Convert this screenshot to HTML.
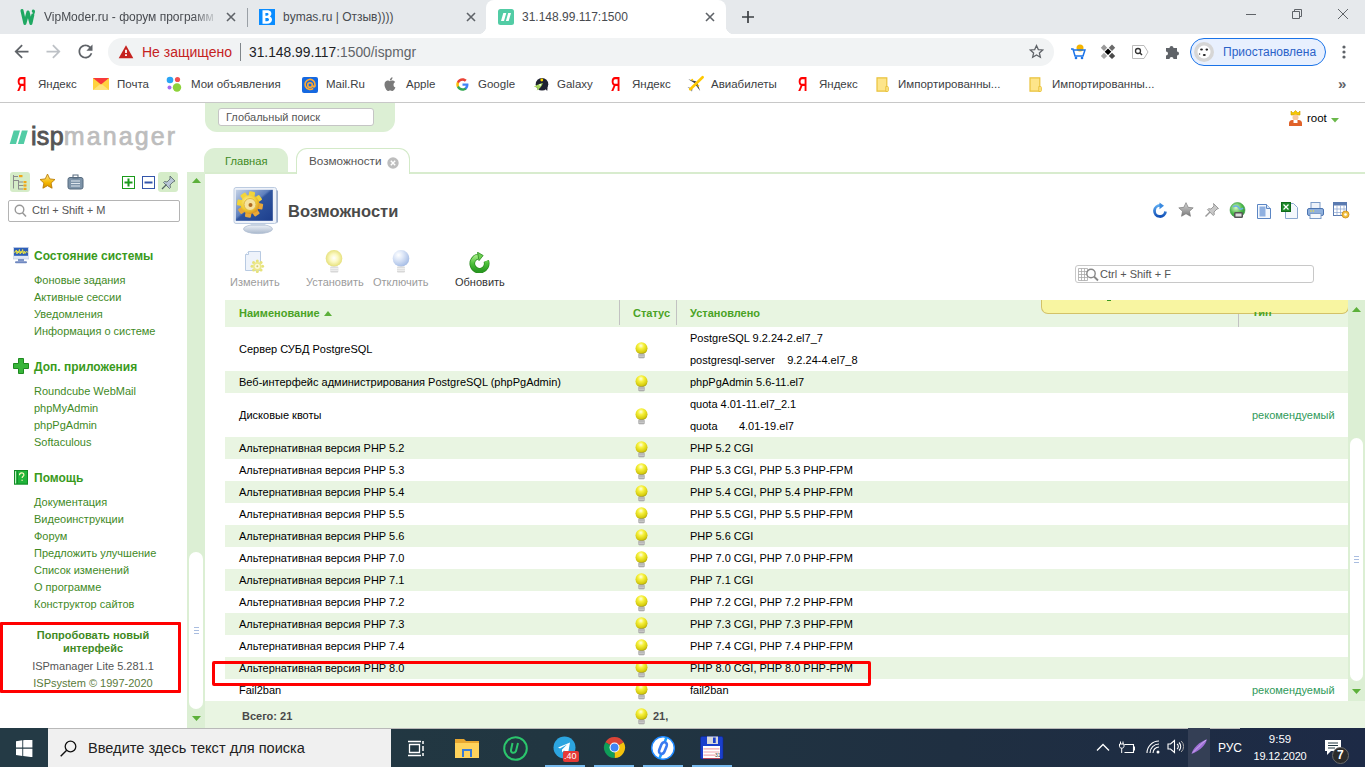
<!DOCTYPE html>
<html><head><meta charset="utf-8">
<style>
*{margin:0;padding:0;box-sizing:border-box}
html,body{width:1365px;height:767px;overflow:hidden;background:#fff;font-family:"Liberation Sans",sans-serif}
.a{position:absolute}
.t{position:absolute;white-space:nowrap}
/* chrome */
#tabs{position:absolute;left:0;top:0;width:1365px;height:34px;background:#e6e9ec}
#toolbar{position:absolute;left:0;top:34px;width:1365px;height:34px;background:#fff}
#bm{position:absolute;left:0;top:68px;width:1365px;height:35px;background:#fff;border-bottom:1px solid #c8c8c8}
.tabtxt{font-size:12px;color:#484b50}
.bmt{font-size:11.5px;color:#3c4043;margin-top:1px}
/* page */
#page{position:absolute;left:0;top:103px;width:1365px;height:625px;background:#fff;overflow:hidden}
.sh{font:bold 12px "Liberation Sans";color:#3a9a1c}
.sl{font-size:11px;color:#3f8a1f}
.rowt{font-size:11px;color:#000}
.th{font:bold 11px "Liberation Sans";color:#4aa325}
.side a{color:#3f8a1f}
/* taskbar */
#task{position:absolute;left:0;top:728px;width:1365px;height:39px;background:linear-gradient(90deg,#243a45 0%,#213641 40%,#1f2f41 70%,#1d2a46 100%)}
</style></head><body>
<svg width="0" height="0" style="position:absolute"><defs><radialGradient id="bulbg" cx="45%" cy="30%" r="70%"><stop offset="0" stop-color="#ffffe6"/><stop offset=".35" stop-color="#f7f23c"/><stop offset=".8" stop-color="#d6cc10"/><stop offset="1" stop-color="#a99e00"/></radialGradient><symbol id="bulb" viewBox="0 0 13 17"><circle cx="6.5" cy="6.2" r="6" fill="url(#bulbg)"/><rect x="3.3" y="11.5" width="6.4" height="4.8" rx="1.2" fill="#9a9a9a"/><path d="M3.5 13h6M3.5 14.8h6" stroke="#e8e8e8" stroke-width=".8"/></symbol></defs></svg>
<div id="tabs">
 <!-- tab1 -->
 <svg class="a" style="left:19px;top:8px" width="18" height="18" viewBox="0 0 18 18"><path d="M3 2.6L5.9 15.4L9 4L11.9 15.4L13.8 7" fill="none" stroke="#1fa862" stroke-width="3.1" stroke-linecap="round" stroke-linejoin="round"/><path d="M14.2 1.5c1.3 0 1.9 1 1.8 2.200-.1 1.500-.9 2.700-1.800 3.800l-.7-.3c.4-.9.6-1.600.5-2.300-.8-.3-1.300-1-1.200-1.800.1-.9.700-1.600 1.400-1.600z" fill="#1fa862"/></svg>
 <div class="t tabtxt" style="left:44px;top:10px;width:175px;overflow:hidden;-webkit-mask-image:linear-gradient(90deg,#000 85%,transparent)">VipModer.ru - форум программ</div>
 <svg class="a" style="left:226px;top:12px" width="10" height="10" viewBox="0 0 10 10"><path d="M1 1L9 9M9 1L1 9" stroke="#5f6368" stroke-width="1.6"/></svg>
 <div class="a" style="left:247px;top:8px;width:1px;height:19px;background:#9aa0a6"></div>
 <!-- tab2 -->
 <svg class="a" style="left:259px;top:9px" width="16" height="16" viewBox="0 0 16 16"><rect width="16" height="16" fill="#0a8cff"/><path fill-rule="evenodd" fill="#fff" d="M3.5 1.3H8C11.3 1.300 12.400 3 12.400 4.800C12.400 6 11.800 6.900 10.800 7.400C12.300 7.900 13 9.100 13 10.600C13 13 11.200 14.800 8 14.800H3.500ZM6.400 4V6.700H7.900C8.900 6.700 9.500 6.200 9.500 5.300C9.500 4.500 8.900 4 7.900 4ZM6.400 9V12.200H8.100C9.300 12.200 10 11.600 10 10.600C10 9.600 9.300 9 8.100 9Z"/></svg>
 <div class="t tabtxt" style="left:283px;top:10px">bymas.ru | Отзыв))))</div>
 <svg class="a" style="left:466px;top:12px" width="10" height="10" viewBox="0 0 10 10"><path d="M1 1L9 9M9 1L1 9" stroke="#5f6368" stroke-width="1.6"/></svg>
 <!-- active tab -->
 <div class="a" style="left:486px;top:0;width:240px;height:34px;background:#fff;border-radius:8px 8px 0 0"></div>
 <div class="a" style="left:478px;top:26px;width:8px;height:8px;background:radial-gradient(circle at 0 0,#e6e9ec 8px,#fff 8.5px)"></div>
 <div class="a" style="left:726px;top:26px;width:8px;height:8px;background:radial-gradient(circle at 100% 0,#e6e9ec 8px,#fff 8.5px)"></div>
 <div class="a" style="left:498px;top:9px;width:16px;height:16px;background:#52cca5;border-radius:2.5px"></div>
 <svg class="a" style="left:498px;top:9px" width="16" height="16" viewBox="0 0 16 16"><path d="M5.3 4h3l-2.3 8h-3zM10.200 4h2.800l-2.300 8h-2.800z" fill="#fff"/></svg>
 <div class="t tabtxt" style="left:522px;top:10px">31.148.99.117:1500</div>
 <svg class="a" style="left:705px;top:12px" width="10" height="10" viewBox="0 0 10 10"><path d="M1 1L9 9M9 1L1 9" stroke="#5f6368" stroke-width="1.6"/></svg>
 <svg class="a" style="left:741px;top:10px" width="14" height="14" viewBox="0 0 14 14"><path d="M7 1V13M1 7H13" stroke="#3c4043" stroke-width="1.7"/></svg>
 <!-- window controls -->
 <div class="a" style="left:1246px;top:14px;width:10px;height:1px;background:#5f6368"></div>
 <svg class="a" style="left:1291px;top:8px" width="12" height="12" viewBox="0 0 12 12"><path d="M1.5 3.5h7v7h-7z M3.5 3.5V1.5h7v7h-2" fill="none" stroke="#5f6368" stroke-width="1"/></svg>
 <svg class="a" style="left:1337px;top:8px" width="12" height="12" viewBox="0 0 12 12"><path d="M1 1L11 11M11 1L1 11" stroke="#5f6368" stroke-width="1"/></svg>
</div>
<div id="toolbar">
 <svg class="a" style="left:11px;top:7px" width="21" height="21" viewBox="0 0 24 24"><path d="M20 11H7.830l5.590-5.590L12 4l-8 8 8 8 1.410-1.410L7.830 13H20v-2z" fill="#5f6368"/></svg>
 <svg class="a" style="left:43px;top:7px" width="21" height="21" viewBox="0 0 24 24"><path d="M12 4l-1.410 1.410L16.170 11H4v2h12.170l-5.580 5.590L12 20l8-8z" fill="#bdc1c6"/></svg>
 <svg class="a" style="left:75px;top:7px" width="21" height="21" viewBox="0 0 24 24"><path d="M17.650 6.350C16.200 4.900 14.210 4 12 4c-4.420 0-7.990 3.580-7.990 8s3.570 8 7.990 8c3.730 0 6.840-2.550 7.730-6h-2.080c-.820 2.330-3.040 4-5.650 4-3.310 0-6-2.690-6-6s2.690-6 6-6c1.660 0 3.140.690 4.220 1.780L13 11h7V4l-2.350 2.350z" fill="#5f6368"/></svg>
 <div class="a" style="left:108px;top:4px;width:946px;height:28px;background:#f1f3f4;border-radius:14px"></div>
 <svg class="a" style="left:118px;top:11px" width="16" height="14" viewBox="0 0 16 14"><path d="M8 0.3L15.3 13.3H0.7Z" fill="#c5221f"/><path d="M7.1 4.7h1.8v3.3h-1.8zM7.1 9.3h1.8v1.8h-1.8z" fill="#fff"/></svg>
 <div class="t" style="left:142px;top:10px;font-size:14px;color:#c5221f">Не защищено</div>
 <div class="a" style="left:240px;top:9px;width:1px;height:18px;background:#80868b"></div>
 <div class="t" style="left:249px;top:11px;font-size:13.8px;color:#202124">31.148.99.117<span style="color:#5f6368">:1500/ispmgr</span></div>
 <svg class="a" style="left:1028.5px;top:10px" width="15" height="15" viewBox="0 0 24 24"><path d="M12 2.5l2.9 6.4 7 .7-5.3 4.7 1.6 6.9L12 17.6l-6.2 3.6 1.6-6.9L2.1 9.6l7-.7z" fill="none" stroke="#5f6368" stroke-width="2"/></svg>
 <!-- extensions -->
 <svg class="a" style="left:1070px;top:10px" width="16" height="16" viewBox="0 0 16 16"><circle cx="10" cy="4" r="3.5" fill="#f4b400"/><path d="M1 5h2l2 7h8l2-6H4" fill="none" stroke="#1a73e8" stroke-width="1.5"/><circle cx="6" cy="14" r="1.3" fill="#1a73e8"/><circle cx="12" cy="14" r="1.3" fill="#1a73e8"/></svg>
 <svg class="a" style="left:1100px;top:10px" width="16" height="16" viewBox="0 0 16 16"><path d="M4 0.5L7.2 3.7 4 6.9 0.8 3.7Z" fill="#9a9a9a"/><path d="M12 0.5L15.2 3.7 12 6.9 8.8 3.7Z" fill="#6a6a6a"/><path d="M8 4.5L11.3 7.8 8 11.1 4.7 7.8Z" fill="#000"/><path d="M4 8.7L7.2 11.9 4 15.1 0.8 11.9Z" fill="#a8a8a8"/><path d="M12 8.7L15.2 11.9 12 15.1 8.8 11.9Z" fill="#4a4a4a"/></svg>
 <svg class="a" style="left:1132px;top:10px" width="17" height="16" viewBox="0 0 17 16"><path d="M0.5 1.5H12L16 8L12 14.5H0.5Z" fill="#fff" stroke="#bbb"/><circle cx="6" cy="7" r="2.5" fill="none" stroke="#333" stroke-width="1.3"/><path d="M7.8 8.8L10 11" stroke="#333" stroke-width="1.5"/></svg>
 <svg class="a" style="left:1164px;top:10px" width="16" height="16" viewBox="0 0 16 16"><path d="M2 4h3.5a2 2 0 1 1 4 0H13v3.5a2 2 0 1 1 0 4V15H9.5a2 2 0 1 0-4 0H2v-3.5a2 2 0 1 0 0-4z" fill="#5f6368"/></svg>
 <div class="a" style="left:1190px;top:4px;width:136px;height:28px;border:1.5px solid #1a73e8;border-radius:14px;background:#e8f0fe"></div>
 <div class="a" style="left:1194px;top:8px;width:20px;height:20px;border-radius:50%;background:#d6d6d6"></div>
 <svg class="a" style="left:1196px;top:10px" width="16" height="16" viewBox="0 0 16 16"><circle cx="8" cy="8" r="6.5" fill="#fff"/><ellipse cx="5.5" cy="5.5" rx="1.4" ry="1.1" fill="#222"/><ellipse cx="10.8" cy="5.6" rx="1.3" ry="1.1" fill="#222"/><ellipse cx="8.3" cy="11" rx="1.5" ry="1.1" fill="#222"/><circle cx="3.6" cy="10" r=".7" fill="#444"/></svg>
 <div class="t" style="left:1223px;top:11px;font-size:12px;color:#2a62c8">Приостановлена</div>
 <svg class="a" style="left:1341px;top:10px" width="6" height="16" viewBox="0 0 6 16"><circle cx="3" cy="3" r="1.6" fill="#5f6368"/><circle cx="3" cy="8" r="1.6" fill="#5f6368"/><circle cx="3" cy="13" r="1.6" fill="#5f6368"/></svg>
</div>
<div id="bm">
 <div class="t" style="left:17px;top:4px;font:bold 21px 'Liberation Sans';color:#f00;line-height:24px;transform:scaleX(.62);transform-origin:0 0">Я</div>
 <div class="t bmt" style="left:38px;top:9px">Яндекс</div>
 <svg class="a" style="left:93px;top:10px" width="16" height="13" viewBox="0 0 16 13"><rect x="0" y="0" width="16" height="12" fill="#ffd23f"/><path d="M0 12L8 5.5L16 12Z" fill="#ffe27a"/><path d="M0 0H16L8 6.5Z" fill="#f8383a"/></svg>
 <div class="t bmt" style="left:117px;top:9px">Почта</div>
 <svg class="a" style="left:166px;top:8px" width="17" height="17" viewBox="0 0 17 17"><circle cx="4" cy="4" r="3.3" fill="#2aa5f5"/><circle cx="11.5" cy="3.5" r="2.6" fill="#f25050"/><circle cx="3.5" cy="11.5" r="2" fill="#a66af0"/><circle cx="11" cy="11.5" r="4.2" fill="#8ed23a"/></svg>
 <div class="t bmt" style="left:191px;top:9px">Мои объявления</div>
 <div class="a" style="left:302px;top:9px;width:16px;height:16px;background:#1568e0;border-radius:2px"></div>
 <svg class="a" style="left:302px;top:9px" width="16" height="16" viewBox="0 0 16 16"><path d="M11.2 11.3A5 5 0 1 1 13 8v1c0 1.3-2.2 1.3-2.2 0V8" fill="none" stroke="#ffa930" stroke-width="1.7"/><circle cx="8" cy="8" r="2.3" fill="none" stroke="#ffa930" stroke-width="1.6"/></svg>
 <div class="t bmt" style="left:326px;top:9px">Mail.Ru</div>
 <svg class="a" style="left:384px;top:9px" width="12" height="15" viewBox="0 0 12 15"><path d="M9.5 8c0-2 1.6-2.8 1.7-2.9C10.2 3.800 8.900 3.600 8.400 3.600 7.300 3.500 6.400 4.200 5.900 4.200S4.600 3.600 3.700 3.600C2.500 3.600 0.500 4.600 0.500 7.600c0 3 2.200 6.400 3.400 6.400 1 0 1.300-.6 2.300-.6s1.300.6 2.300.6C9.600 14 11 11.500 11.400 10.500 11.300 10.400 9.500 9.800 9.500 8zM7.800 2.500C8.300 1.900 8.600 1.100 8.500 0.300 7.800.4 7 .8 6.500 1.400 6 1.900 5.700 2.700 5.800 3.500 6.600 3.500 7.300 3.100 7.800 2.500z" fill="#7a7a7a"/></svg>
 <div class="t bmt" style="left:406px;top:9px">Apple</div>
 <svg class="a" style="left:456px;top:10px" width="13" height="13" viewBox="0 0 24 24"><path d="M23 12.3c0-.8-.1-1.600-.2-2.300H12v4.400h6.200c-.3 1.400-1.100 2.600-2.300 3.400v2.800h3.700C21.800 18.600 23 15.700 23 12.300z" fill="#4285f4"/><path d="M12 23.500c3.100 0 5.700-1 7.600-2.800l-3.700-2.800c-1 .7-2.300 1.100-3.900 1.100-3 0-5.500-2-6.400-4.700H1.800v2.900C3.700 21 7.500 23.500 12 23.500z" fill="#34a853"/><path d="M5.600 14.300c-.2-.7-.4-1.400-.4-2.300s.1-1.600.4-2.300V6.800H1.800C1 8.300.5 10.100.5 12s.5 3.700 1.300 5.200z" fill="#fbbc05"/><path d="M12 5c1.700 0 3.200.6 4.400 1.700l3.300-3.300C17.700 1.500 15.100.5 12 .5 7.500.5 3.700 3 1.800 6.800l3.800 2.900C6.500 7 9 5 12 5z" fill="#ea4335"/></svg>
 <div class="t bmt" style="left:478px;top:9px">Google</div>
 <svg class="a" style="left:533px;top:8px" width="16" height="16" viewBox="0 0 16 16"><circle cx="9" cy="8.200" r="6.300" fill="#1e2130"/><path d="M12 12.500L14.200 15 14.600 11.500Z" fill="#1e2130"/><circle cx="8.800" cy="4" r="1.400" fill="#ffd500"/><path d="M0.8 10.800C3 9.500 6 8 9.800 7C9.200 9.800 7.200 12.200 3.800 14.500L4.300 11.600Z" fill="#a8d860"/><circle cx="7.200" cy="8.800" r=".9" fill="#fff"/></svg>
 <div class="t bmt" style="left:557px;top:9px">Galaxy</div>
 <div class="t" style="left:611px;top:4px;font:bold 21px 'Liberation Sans';color:#f00;line-height:24px;transform:scaleX(.62);transform-origin:0 0">Я</div>
 <div class="t bmt" style="left:632px;top:9px">Яндекс</div>
 <svg class="a" style="left:687px;top:7px" width="17" height="17" viewBox="0 0 17 17"><path d="M1.300 4.300L9.500 6.400 7.800 8.300Z" fill="#3c4048"/><path d="M10.300 8.200L13.200 16 8.700 10Z" fill="#3c4048"/><path d="M0.500 12.200L3.800 13 3.200 14Z" fill="#3c4048"/><path d="M3.900 14.200L5 16.800 5.300 13.600Z" fill="#3c4048"/><path d="M3.300 14.300L15.600 2.200" stroke="#ffc800" stroke-width="2.600" stroke-linecap="round"/><circle cx="5.200" cy="4.700" r="1" fill="#ffc800"/><circle cx="11.300" cy="10.800" r="1" fill="#ffc800"/></svg>
 <div class="t bmt" style="left:711px;top:9px">Авиабилеты</div>
 <div class="t" style="left:798px;top:4px;font:bold 21px 'Liberation Sans';color:#f00;line-height:24px;transform:scaleX(.62);transform-origin:0 0">Я</div>
 <div class="t bmt" style="left:819px;top:9px">Яндекс</div>
 <svg class="a" style="left:876px;top:9px" width="13" height="15" viewBox="0 0 13 15"><path d="M1 0.8H10.8V14.2H1Z" fill="#fde58a" stroke="#e9c23c" stroke-width="1.2"/><path d="M9.800 9.500h1.700c.600 0 .800.400.800 1v3.200c0 .500-.300.800-.800.800H9.800Z" fill="#fde58a" stroke="#e9c23c" stroke-width="1"/></svg>
 <div class="t bmt" style="left:898px;top:9px">Импортированны...</div>
 <svg class="a" style="left:1029px;top:9px" width="13" height="15" viewBox="0 0 13 15"><path d="M1 0.8H10.8V14.2H1Z" fill="#fde58a" stroke="#e9c23c" stroke-width="1.2"/><path d="M9.800 9.500h1.700c.600 0 .800.400.800 1v3.200c0 .500-.300.800-.800.800H9.800Z" fill="#fde58a" stroke="#e9c23c" stroke-width="1"/></svg>
 <div class="t bmt" style="left:1052px;top:9px">Импортированны...</div>
 <div class="t" style="left:1338px;top:7px;font:bold 15px 'Liberation Sans';color:#5f6368">»</div>
</div>
<div id="page">
 <!-- logo -->
 <svg class="a" style="left:9px;top:27px" width="19" height="15" viewBox="0 0 19 15"><path d="M4.7 0.5h6.3l-4 13.5h-6.3zM12.9 0.5h5.9l-4 13.5h-5.9z" fill="#52cca5"/></svg>
 <div class="t" style="left:31px;top:16px;font-size:25px;line-height:34px;color:#555;-webkit-text-stroke:0.9px #555;letter-spacing:0.3px">isp<span style="color:#bdbdbd;-webkit-text-stroke:0.7px #bdbdbd;letter-spacing:2.1px">manager</span></div>
 <!-- sidebar toolbar -->
 <div class="a" style="left:10px;top:69px;width:20px;height:20px;background:#d5ecc8;border-radius:3px"></div>
 <svg class="a" style="left:10px;top:69px" width="20" height="20" viewBox="0 0 20 20"><path d="M3.5 3v13.5M3 4.5h5M3.5 8.5h5M8.5 8v9M8 10h5M8.5 13.5h5M8 17h5" stroke="#8c8c8c" stroke-width="1" fill="none"/><rect x="9" y="3" width="3.5" height="2.2" fill="#f0a818"/><rect x="13.5" y="9" width="3" height="2.2" fill="#f0a818"/><rect x="13.5" y="12.4" width="3" height="2.2" fill="#f0a818"/><rect x="13.5" y="15.8" width="3" height="2.2" fill="#f0a818"/></svg>
 <svg class="a" style="left:39px;top:70px" width="17" height="17" viewBox="0 0 24 24"><defs><linearGradient id="sg" x1="0" y1="0" x2="0" y2="1"><stop offset="0" stop-color="#ffe890"/><stop offset=".6" stop-color="#f5b800"/><stop offset="1" stop-color="#d08a00"/></linearGradient></defs><path d="M12 1.5l3.2 6.8 7.3.9-5.4 5 1.4 7.3L12 17.9l-6.5 3.6 1.4-7.3-5.4-5 7.3-.9z" fill="url(#sg)" stroke="#b87a00" stroke-width="1.2"/></svg>
 <svg class="a" style="left:67px;top:71px" width="17" height="16" viewBox="0 0 17 16"><rect x="1" y="3.5" width="15" height="11.5" rx="2" fill="#7d93a8" stroke="#566a7e"/><rect x="6" y="1" width="5" height="3" fill="none" stroke="#566a7e"/><path d="M4 7h9M4 9.5h9M4 12h9" stroke="#dfe7ee" stroke-width="1.2"/></svg>
 <svg class="a" style="left:122px;top:73px" width="14" height="13" viewBox="0 0 14 13"><rect x="0.5" y="0.5" width="12" height="12" fill="#fff" stroke="#1b9a1b"/><path d="M6.5 2.5v8M2.5 6.5h8" stroke="#1b9a1b" stroke-width="2"/></svg>
 <svg class="a" style="left:142px;top:73px" width="14" height="13" viewBox="0 0 14 13"><rect x="0.5" y="0.5" width="12" height="12" fill="#fff" stroke="#3355aa"/><path d="M2.5 6.5h8" stroke="#3355aa" stroke-width="2"/></svg>
 <div class="a" style="left:158px;top:69px;width:20px;height:20px;background:#d5ecc8;border-radius:3px"></div>
 <svg class="a" style="left:161px;top:72px" width="15" height="15" viewBox="0 0 15 15"><path d="M9 1l5 5-2 1-3 3 .5 2.5-1 1-6-6 1-1 2.5.5 3-3z" fill="#b9c6d6" stroke="#566" stroke-width=".8"/><path d="M5.5 9.5L1 14" stroke="#566" stroke-width="1.3"/></svg>
 <div class="a" style="left:8px;top:97px;width:172px;height:22px;border:1px solid #b4b4b4;border-radius:2px"></div>
 <svg class="a" style="left:14px;top:101px" width="13" height="14" viewBox="0 0 13 14"><circle cx="5.5" cy="5.5" r="4.3" fill="none" stroke="#999" stroke-width="1.4"/><path d="M8.5 8.8L12 12.5" stroke="#999" stroke-width="1.6"/></svg>
 <div class="t" style="left:32px;top:101px;font-size:11px;color:#555">Ctrl + Shift + M</div>
 <!-- groups -->
 <svg class="a" style="left:13px;top:144px" width="16" height="17" viewBox="0 0 16 17"><rect x="0" y="0" width="16" height="12" fill="#dfe7f5" stroke="#b0c0dc" stroke-width=".5"/><rect x="1" y="0.8" width="14" height="8" fill="#2f5fb8"/><path d="M1 5.300L2.500 5 3.300 3 4 7 4.800 4 5.600 6 6.400 2.500 7.200 7 8 4 8.800 6 9.600 2.500 10.400 7 11.200 4 12 6.500 13 4.500 15 5.300" fill="none" stroke="#f2ea3c" stroke-width=".9"/><rect x="5" y="12" width="6" height="2.300" fill="#7d95c8"/><rect x="2" y="14.200" width="12" height="2" rx="1" fill="#6f88c0"/></svg>
 <div class="t sh" style="left:34px;top:146px">Состояние системы</div>
 <div class="t sl" style="left:34px;top:171px">Фоновые задания</div>
<div class="t sl" style="left:34px;top:188px">Активные сессии</div>
<div class="t sl" style="left:34px;top:205px">Уведомления</div>
<div class="t sl" style="left:34px;top:222px">Информация о системе</div>
 <svg class="a" style="left:13px;top:255px" width="16" height="16" viewBox="0 0 16 16"><path d="M5.5 0.5h5v5h5v5h-5v5h-5v-5h-5v-5h5z" fill="#38b63a" stroke="#1f8a20"/></svg>
 <div class="t sh" style="left:34px;top:257px">Доп. приложения</div>
 <div class="t sl" style="left:34px;top:282px">Roundcube WebMail</div>
<div class="t sl" style="left:34px;top:299px">phpMyAdmin</div>
<div class="t sl" style="left:34px;top:316px">phpPgAdmin</div>
<div class="t sl" style="left:34px;top:333px">Softaculous</div>
 <svg class="a" style="left:14px;top:367px" width="14" height="15" viewBox="0 0 14 15"><rect x="0" y="0" width="14" height="14.500" fill="#1fb43a"/><rect x="0.500" y="0.500" width="13" height="13.500" fill="none" stroke="#138a26" stroke-width="1"/><path d="M1.600 1.200v12.300" stroke="#d8f8d8" stroke-width="1"/><path d="M3.300 1.200v12.300" stroke="#0f7a20" stroke-width=".8"/><path d="M5.500 5.200c0-1.500.900-2.300 2.200-2.300s2.200.800 2.200 2c0 1.300-1.800 1.500-1.800 3" fill="none" stroke="#fff6c0" stroke-width="1.100"/><rect x="7.500" y="9.700" width="1.200" height="1.200" fill="#fff6c0"/></svg>
 <div class="t sh" style="left:34px;top:368px">Помощь</div>
 <div class="t sl" style="left:34px;top:393px">Документация</div>
<div class="t sl" style="left:34px;top:410px">Видеоинструкции</div>
<div class="t sl" style="left:34px;top:427px">Форум</div>
<div class="t sl" style="left:34px;top:444px">Предложить улучшение</div>
<div class="t sl" style="left:34px;top:461px">Список изменений</div>
<div class="t sl" style="left:34px;top:478px">О программе</div>
<div class="t sl" style="left:34px;top:495px">Конструктор сайтов</div>
 <!-- red box -->
 <div class="a" style="left:0;top:519px;width:181px;height:71px;border:3px solid #f00;border-radius:1px"></div>
 <div class="t" style="left:0;width:186px;text-align:center;top:526px;font:bold 11px/13px 'Liberation Sans';color:#3f8a1f">Попробовать новый<br>интерфейс</div>
 <div class="t" style="left:0;width:186px;text-align:center;top:557px;font-size:11px;color:#555">ISPmanager Lite 5.281.1</div>
 <div class="t" style="left:0;width:186px;text-align:center;top:574px;font-size:11px;color:#5a7a3a">ISPsystem © 1997-2020</div>

 <!-- global search panel -->
 <div class="a" style="left:205px;top:0;width:190px;height:29px;background:#dcefd4;border-radius:0 0 12px 12px"></div>
 <div class="a" style="left:218px;top:5px;width:156px;height:18px;background:#fff;border:1px solid #c5c5c5;border-radius:3px"></div>
 <div class="t" style="left:226px;top:8px;font-size:11px;color:#555">Глобальный поиск</div>
 <!-- user -->
 <svg class="a" style="left:1288px;top:7px" width="15" height="16" viewBox="0 0 15 16"><path d="M3 1l2 2 2.5-2.5L10 3l2-2v4H3z" fill="#f6c700" stroke="#c99a00" stroke-width=".6"/><circle cx="7.5" cy="7.5" r="3" fill="#f7c9a0"/><path d="M1 16v-3c0-2 2-3 3-3h7c1 0 3 1 3 3v3z" fill="#e0622a"/><path d="M5.5 10h4v3h-4z" fill="#fff"/></svg>
 <div class="t" style="left:1307px;top:9px;font-size:11.5px;color:#000">root</div>
 <svg class="a" style="left:1331px;top:15px" width="8" height="5" viewBox="0 0 8 5"><path d="M0 0h8l-4 4.5z" fill="#6ab84a"/></svg>

 <!-- tabs -->
 <div class="a" style="left:204px;top:45px;width:84px;height:25px;background:#dcefd4;border-radius:11px 11px 0 0"></div>
 <div class="t" style="left:225px;top:52px;font-size:11.2px;color:#3f8a1f">Главная</div>
 <div class="a" style="left:205px;top:69px;width:1160px;height:2px;background:#d8ecce"></div>
 <div class="a" style="left:296px;top:45px;width:114px;height:26px;background:#fff;border:1px solid #d3eac8;border-bottom:none;border-radius:11px 11px 0 0"></div>
 <div class="t" style="left:309px;top:51px;font-size:11.7px;color:#555">Возможности</div>
 <svg class="a" style="left:387px;top:54px" width="12" height="12" viewBox="0 0 12 12"><circle cx="6" cy="6" r="5.7" fill="#bdbdbd"/><path d="M3.8 3.8L8.2 8.2M8.2 3.8L3.8 8.2" stroke="#fff" stroke-width="1.4"/></svg>

 <!-- splitter strip -->
 <div class="a" style="left:187px;top:69px;width:18px;height:556px;background:#dcefd4"></div>
 <svg class="a" style="left:192px;top:75px" width="9" height="5" viewBox="0 0 9 5"><path d="M0 5h9L4.5 0z" fill="#5cb03a"/></svg>
 <div class="a" style="left:189px;top:449px;width:14px;height:157px;background:#fff;border-radius:7px"></div>
 <div class="a" style="left:194px;top:524px;width:5px;height:1px;background:#a9bde0"></div><div class="a" style="left:194px;top:527px;width:5px;height:1px;background:#a9bde0"></div><div class="a" style="left:194px;top:530px;width:5px;height:1px;background:#a9bde0"></div>
 <svg class="a" style="left:192px;top:613px" width="9" height="5" viewBox="0 0 9 5"><path d="M0 0h9L4.5 5z" fill="#5cb03a"/></svg>

 <!-- page header -->
 <svg class="a" style="left:232px;top:84px" width="48" height="50" viewBox="0 0 48 50"><defs><linearGradient id="scr" x1="0" y1="0" x2="1" y2="1"><stop offset="0" stop-color="#c4d2e6"/><stop offset=".45" stop-color="#5d7fbd"/><stop offset=".5" stop-color="#2f559f"/><stop offset="1" stop-color="#1d3e8c"/></linearGradient><linearGradient id="base" x1="0" y1="0" x2="0" y2="1"><stop offset="0" stop-color="#f2f5fa"/><stop offset="1" stop-color="#a9b8cc"/></linearGradient><radialGradient id="gearg" cx="40%" cy="35%" r="70%"><stop offset="0" stop-color="#fff6a0"/><stop offset=".6" stop-color="#f0cc30"/><stop offset="1" stop-color="#d88a20"/></radialGradient></defs>
<ellipse cx="26" cy="42" rx="14.5" ry="4.6" fill="url(#base)" stroke="#b0bed2" stroke-width=".8"/>
<path d="M20 35h12l2 4H18z" fill="#c8d3e2"/>
<rect x="2" y="0.5" width="42.5" height="36" rx="2" fill="#eef2f9" stroke="#bccbe0" stroke-width="1"/>
<path d="M44.5 2.5l1.5 1.5v31l-1.5 1.5z" fill="#9fb0cc"/>
<rect x="3.8" y="2.8" width="37" height="31" fill="url(#scr)"/>
<rect x="-3" y="-13" width="6" height="6" rx="1" transform="translate(18 17.5) rotate(10)" fill="#f2d43a"/><rect x="-3" y="-13" width="6" height="6" rx="1" transform="translate(18 17.5) rotate(55)" fill="#f2d43a"/><rect x="-3" y="-13" width="6" height="6" rx="1" transform="translate(18 17.5) rotate(100)" fill="#e8a83a"/><rect x="-3" y="-13" width="6" height="6" rx="1" transform="translate(18 17.5) rotate(145)" fill="#e8a83a"/><rect x="-3" y="-13" width="6" height="6" rx="1" transform="translate(18 17.5) rotate(190)" fill="#e8a83a"/><rect x="-3" y="-13" width="6" height="6" rx="1" transform="translate(18 17.5) rotate(235)" fill="#e8a83a"/><rect x="-3" y="-13" width="6" height="6" rx="1" transform="translate(18 17.5) rotate(280)" fill="#f2d43a"/><rect x="-3" y="-13" width="6" height="6" rx="1" transform="translate(18 17.5) rotate(325)" fill="#f2d43a"/>
<circle cx="18" cy="17.5" r="9.5" fill="url(#gearg)"/>
<circle cx="18" cy="17.5" r="6" fill="#f5e3a0" stroke="#e0b840" stroke-width="1"/>
<circle cx="18.5" cy="18.0" r="2" fill="#b06a20"/>
</svg>
 <div class="t" style="left:288px;top:99px;font:bold 16.5px 'Liberation Sans';color:#4a4a4a">Возможности</div>
 <svg class="a" style="left:1152px;top:99px" width="16" height="16" viewBox="0 0 16 16"><defs><linearGradient id="rf" x1="0" y1="0" x2="0" y2="1"><stop offset="0" stop-color="#5aa8f0"/><stop offset="1" stop-color="#1553b8"/></linearGradient></defs><path d="M13.5 9.5A5.5 5.5 0 1 1 8.5 3.5" fill="none" stroke="url(#rf)" stroke-width="2.8"/><path d="M7.5 0.5L12 3.8 7.5 7.2z" fill="#3a8ae0"/></svg>
 <svg class="a" style="left:1178px;top:99px" width="16" height="16" viewBox="0 0 24 24"><defs><linearGradient id="st" x1="0" y1="0" x2="0" y2="1"><stop offset="0" stop-color="#d8d8d8"/><stop offset="1" stop-color="#7a7a7a"/></linearGradient></defs><path d="M12 1l3.3 7 7.5.8-5.6 5.1 1.5 7.5L12 17.6 5.300 21.400l1.500-7.500L1.200 8.800l7.500-.8z" fill="url(#st)" stroke="#777" stroke-width="1"/></svg>
 <svg class="a" style="left:1204px;top:99px" width="16" height="16" viewBox="0 0 16 16"><path d="M9.5 1.5l5 5-1.5.5-3 3 .3 2.5-1 1L3.500 7.700l1-1 2.500.3 3-3z" fill="#c8c8c8" stroke="#888" stroke-width=".8"/><path d="M6 10L1.5 14.5" stroke="#999" stroke-width="1.5"/></svg>
 <svg class="a" style="left:1229px;top:99px" width="17" height="17" viewBox="0 0 17 17"><defs><radialGradient id="gl" cx="40%" cy="35%" r="70%"><stop offset="0" stop-color="#d8f5c8"/><stop offset=".6" stop-color="#4cba4a"/><stop offset="1" stop-color="#2a8a3a"/></radialGradient></defs><circle cx="8.5" cy="8" r="7.5" fill="url(#gl)" stroke="#3a9a40" stroke-width=".6"/><path d="M4 5c2-2 5-1 6 1s3 1 4 0" fill="none" stroke="#6ab0e8" stroke-width="1.5"/><rect x="5" y="10" width="9" height="6" rx="1.5" fill="#555"/><rect x="6.5" y="11.5" width="6" height="3" fill="#ddd"/></svg>
 <svg class="a" style="left:1257px;top:99px" width="14" height="17" viewBox="0 0 14 17"><path d="M0.5 2.5h9l4 4v10h-13z" fill="#f4f8fd" stroke="#5b86c4"/><path d="M2.500 4.500h6v10h-6z" fill="#8fb0e0"/><path d="M9.5 2.5v4h4" fill="#dbe6f5" stroke="#5b86c4"/></svg>
 <svg class="a" style="left:1281px;top:99px" width="17" height="17" viewBox="0 0 17 17"><path d="M4.5 1.5h8l4 4v11h-12z" fill="#f4f8fd" stroke="#8aa8d0"/><rect x="0.5" y="0.5" width="9" height="9" fill="#1e8a2a" stroke="#0f6a1a"/><path d="M2.5 2.5l5 5M7.5 2.5l-5 5" stroke="#fff" stroke-width="1.3"/></svg>
 <svg class="a" style="left:1307px;top:99px" width="17" height="17" viewBox="0 0 17 17"><rect x="4" y="0.5" width="9" height="6" fill="#eef3fa" stroke="#7c9cc8"/><rect x="0.5" y="6.5" width="16" height="7" rx="1.5" fill="#8fb0dc" stroke="#4c74b0"/><rect x="3" y="11.5" width="11" height="5" fill="#f4f8fd" stroke="#7c9cc8"/><circle cx="4" cy="9" r=".8" fill="#f0e040"/><circle cx="6.5" cy="9" r=".8" fill="#f0e040"/></svg>
 <svg class="a" style="left:1333px;top:99px" width="17" height="17" viewBox="0 0 17 17"><rect x="0.5" y="0.5" width="13" height="13" fill="#fff" stroke="#5a7ab0"/><rect x="0.5" y="0.5" width="13" height="3" fill="#5a7ab0"/><path d="M0.5 7h13M0.5 10.5h13M4 3.5v10M7.5 3.5v10M11 3.5v10" stroke="#8aa4d0" stroke-width=".7"/><circle cx="12.5" cy="12.5" r="3.5" fill="#f0c040" stroke="#d08a10" stroke-width=".8"/><circle cx="12.5" cy="12.5" r="1.3" fill="#fff"/></svg>
 <!-- action toolbar -->
 <svg class="a" style="left:245px;top:148px" width="20" height="22" viewBox="0 0 20 22"><path d="M0.5 3.5L3.5 0.5H15.5V19.5H0.5Z" fill="#eef3fb" stroke="#b8cae2"/><path d="M0.5 3.5H3.5V0.5" fill="#fff" stroke="#b8cae2"/><circle cx="17.60" cy="15.30" r="1.5" fill="#e6e27a"/><circle cx="16.05" cy="19.05" r="1.5" fill="#e6e27a"/><circle cx="12.30" cy="20.60" r="1.5" fill="#e6e27a"/><circle cx="8.55" cy="19.05" r="1.5" fill="#e6e27a"/><circle cx="7.00" cy="15.30" r="1.5" fill="#e6e27a"/><circle cx="8.55" cy="11.55" r="1.5" fill="#e6e27a"/><circle cx="12.30" cy="10.00" r="1.5" fill="#e6e27a"/><circle cx="16.05" cy="11.55" r="1.5" fill="#e6e27a"/><circle cx="12.3" cy="15.3" r="4.4" fill="#ece88a"/><circle cx="12.3" cy="15.3" r="2.6" fill="#fbf8d8"/><circle cx="12.3" cy="15.3" r="1" fill="#cfc77a"/></svg>
 <div class="t" style="left:230px;top:173px;font-size:11px;color:#9c9c9c">Изменить</div>
 <svg class="a" style="left:325px;top:147px" width="18" height="23" viewBox="0 0 18 23"><defs><radialGradient id="yb" cx="50%" cy="48%" r="55%"><stop offset="0" stop-color="#ffffff"/><stop offset=".45" stop-color="#fbf8c0"/><stop offset="1" stop-color="#e2dc70"/></radialGradient></defs><circle cx="9" cy="8.4" r="8.3" fill="url(#yb)"/><rect x="5.3" y="16.6" width="8" height="6" rx="1" fill="#d8d8d8"/><path d="M5.3 18.3h8M5.3 20.2h8" stroke="#f8f8f8" stroke-width=".9"/></svg>
 <div class="t" style="left:306px;top:173px;font-size:11px;color:#9c9c9c">Установить</div>
 <svg class="a" style="left:392px;top:147px" width="18" height="23" viewBox="0 0 18 23"><defs><radialGradient id="bb" cx="35%" cy="30%" r="70%"><stop offset="0" stop-color="#ffffff"/><stop offset=".4" stop-color="#dfe8f8"/><stop offset="1" stop-color="#a9bfe6"/></radialGradient></defs><circle cx="9" cy="8.4" r="8.3" fill="url(#bb)"/><rect x="5" y="16.6" width="8" height="6" rx="1" fill="#d8d8d8"/><path d="M5 18.3h8M5 20.2h8" stroke="#f8f8f8" stroke-width=".9"/></svg>
 <div class="t" style="left:373px;top:173px;font-size:11px;color:#9c9c9c">Отключить</div>
 <svg class="a" style="left:468px;top:149px" width="24" height="21" viewBox="0 0 24 21"><defs><linearGradient id="gr" x1="0" y1="0" x2="0" y2="1"><stop offset="0" stop-color="#9ee880"/><stop offset=".5" stop-color="#4cc03a"/><stop offset="1" stop-color="#2a9a22"/></linearGradient></defs><path d="M18.27 9.04A7.2 7.2 0 1 1 10.25 4.41" fill="none" stroke="#2a8a1e" stroke-width="5.6"/><path d="M18.27 9.04A7.2 7.2 0 1 1 10.25 4.41" fill="none" stroke="url(#gr)" stroke-width="4.2"/><path d="M15.17 3.54L9.50 0.17L11.00 8.64Z" fill="#6cd050" stroke="#2a8a1e" stroke-width=".8"/></svg>
 <div class="t" style="left:455px;top:173px;font-size:11px;color:#333">Обновить</div>
 <!-- filter -->
 <div class="a" style="left:1075px;top:162px;width:239px;height:18px;border:1px solid #c8c8c8;border-radius:3px;background:#fff"></div>
 <svg class="a" style="left:1078px;top:164px" width="21" height="15" viewBox="0 0 21 15"><path d="M0.5 1.5h9v12h-9zM0.5 4.5h9M0.5 7.5h9M0.5 10.5h9M3.5 1.5v12M6.5 1.5v12" fill="none" stroke="#aaa" stroke-width=".8"/><circle cx="13" cy="6.5" r="4.2" fill="#fff" stroke="#888" stroke-width="1.4"/><path d="M16 9.5l4 4" stroke="#888" stroke-width="1.8"/></svg>
 <div class="t" style="left:1100px;top:165px;font-size:11px;color:#555">Ctrl + Shift + F</div>
 <!-- tooltip -->

 <!-- table header -->
 <div class="a" style="left:225px;top:197px;width:1123px;height:27px;background:#e8f5e1"></div>
 <div class="a" style="left:1041px;top:197px;width:308px;height:14px;background:#f8f5a1;border:1px solid #d3c268;border-top:none;border-radius:0 0 7px 7px"></div>
 <div class="a" style="left:1107px;top:197px;width:4px;height:1px;background:#3a9a20"></div>
 <div class="t th" style="left:239px;top:204px">Наименование</div>
 <svg class="a" style="left:324px;top:208px" width="8" height="5" viewBox="0 0 8 5"><path d="M0 5h8L4 0z" fill="#5cb03a"/></svg>
 <div class="a" style="left:619px;top:197px;width:1px;height:25px;background:#c2c2c2"></div>
 <div class="t th" style="left:633px;top:204px">Статус</div>
 <div class="a" style="left:676px;top:197px;width:1px;height:25px;background:#c2c2c2"></div>
 <div class="t th" style="left:690px;top:204px">Установлено</div>
 <div class="a" style="left:1238px;top:211px;width:1px;height:13px;background:#c2c2c2"></div>
 <div class="t th" style="left:1252px;top:209px;height:6px;overflow:hidden;line-height:1px">Тип</div>
 <!-- rows -->
<div class="t rowt" style="left:239px;top:240px">Сервер СУБД PostgreSQL</div>
<svg class="a" style="left:635px;top:239px" width="13" height="17"><use href="#bulb"/></svg>
<div class="t rowt" style="left:690px;top:229px">PostgreSQL 9.2.24-2.el7_7</div>
<div class="t rowt" style="left:690px;top:251px">postgresql-server&nbsp;&nbsp;&nbsp;&nbsp;9.2.24-4.el7_8</div>
<div class="a" style="left:225px;top:268px;width:1123px;height:22px;background:#e9f5e2"></div>
<div class="t rowt" style="left:239px;top:273px">Веб-интерфейс администрирования PostgreSQL (phpPgAdmin)</div>
<svg class="a" style="left:635px;top:272px" width="13" height="17"><use href="#bulb"/></svg>
<div class="t rowt" style="left:690px;top:273px">phpPgAdmin 5.6-11.el7</div>
<div class="t rowt" style="left:239px;top:306px">Дисковые квоты</div>
<svg class="a" style="left:635px;top:305px" width="13" height="17"><use href="#bulb"/></svg>
<div class="t rowt" style="left:690px;top:295px">quota 4.01-11.el7_2.1</div>
<div class="t rowt" style="left:690px;top:317px">quota&nbsp;&nbsp;&nbsp;&nbsp;&nbsp;&nbsp;&nbsp;4.01-19.el7</div>
<div class="t rowt" style="left:1252px;top:306px;color:#2f9a5a">рекомендуемый</div>
<div class="a" style="left:225px;top:334px;width:1123px;height:22px;background:#e9f5e2"></div>
<div class="t rowt" style="left:239px;top:339px">Альтернативная версия PHP 5.2</div>
<svg class="a" style="left:635px;top:338px" width="13" height="17"><use href="#bulb"/></svg>
<div class="t rowt" style="left:690px;top:339px">PHP 5.2 CGI</div>
<div class="t rowt" style="left:239px;top:361px">Альтернативная версия PHP 5.3</div>
<svg class="a" style="left:635px;top:360px" width="13" height="17"><use href="#bulb"/></svg>
<div class="t rowt" style="left:690px;top:361px">PHP 5.3 CGI, PHP 5.3 PHP-FPM</div>
<div class="a" style="left:225px;top:378px;width:1123px;height:22px;background:#e9f5e2"></div>
<div class="t rowt" style="left:239px;top:383px">Альтернативная версия PHP 5.4</div>
<svg class="a" style="left:635px;top:382px" width="13" height="17"><use href="#bulb"/></svg>
<div class="t rowt" style="left:690px;top:383px">PHP 5.4 CGI, PHP 5.4 PHP-FPM</div>
<div class="t rowt" style="left:239px;top:405px">Альтернативная версия PHP 5.5</div>
<svg class="a" style="left:635px;top:404px" width="13" height="17"><use href="#bulb"/></svg>
<div class="t rowt" style="left:690px;top:405px">PHP 5.5 CGI, PHP 5.5 PHP-FPM</div>
<div class="a" style="left:225px;top:422px;width:1123px;height:22px;background:#e9f5e2"></div>
<div class="t rowt" style="left:239px;top:427px">Альтернативная версия PHP 5.6</div>
<svg class="a" style="left:635px;top:426px" width="13" height="17"><use href="#bulb"/></svg>
<div class="t rowt" style="left:690px;top:427px">PHP 5.6 CGI</div>
<div class="t rowt" style="left:239px;top:449px">Альтернативная версия PHP 7.0</div>
<svg class="a" style="left:635px;top:448px" width="13" height="17"><use href="#bulb"/></svg>
<div class="t rowt" style="left:690px;top:449px">PHP 7.0 CGI, PHP 7.0 PHP-FPM</div>
<div class="a" style="left:225px;top:466px;width:1123px;height:22px;background:#e9f5e2"></div>
<div class="t rowt" style="left:239px;top:471px">Альтернативная версия PHP 7.1</div>
<svg class="a" style="left:635px;top:470px" width="13" height="17"><use href="#bulb"/></svg>
<div class="t rowt" style="left:690px;top:471px">PHP 7.1 CGI</div>
<div class="t rowt" style="left:239px;top:493px">Альтернативная версия PHP 7.2</div>
<svg class="a" style="left:635px;top:492px" width="13" height="17"><use href="#bulb"/></svg>
<div class="t rowt" style="left:690px;top:493px">PHP 7.2 CGI, PHP 7.2 PHP-FPM</div>
<div class="a" style="left:225px;top:510px;width:1123px;height:22px;background:#e9f5e2"></div>
<div class="t rowt" style="left:239px;top:515px">Альтернативная версия PHP 7.3</div>
<svg class="a" style="left:635px;top:514px" width="13" height="17"><use href="#bulb"/></svg>
<div class="t rowt" style="left:690px;top:515px">PHP 7.3 CGI, PHP 7.3 PHP-FPM</div>
<div class="t rowt" style="left:239px;top:537px">Альтернативная версия PHP 7.4</div>
<svg class="a" style="left:635px;top:536px" width="13" height="17"><use href="#bulb"/></svg>
<div class="t rowt" style="left:690px;top:537px">PHP 7.4 CGI, PHP 7.4 PHP-FPM</div>
<div class="a" style="left:225px;top:554px;width:1123px;height:22px;background:#e9f5e2"></div>
<div class="t rowt" style="left:239px;top:559px">Альтернативная версия PHP 8.0</div>
<svg class="a" style="left:635px;top:558px" width="13" height="17"><use href="#bulb"/></svg>
<div class="t rowt" style="left:690px;top:559px">PHP 8.0 CGI, PHP 8.0 PHP-FPM</div>
<div class="t rowt" style="left:239px;top:581px">Fail2ban</div>
<svg class="a" style="left:635px;top:580px" width="13" height="17"><use href="#bulb"/></svg>
<div class="t rowt" style="left:690px;top:581px">fail2ban</div>
<div class="t rowt" style="left:1252px;top:581px;color:#2f9a5a">рекомендуемый</div>
 <!-- footer -->
 <div class="a" style="left:205px;top:598px;width:1160px;height:27px;background:#e9f5e2"></div>
 <div class="t" style="left:242px;top:607px;font:bold 11px 'Liberation Sans';color:#4a4a4a">Всего: 21</div>
 <svg class="a" style="left:635px;top:605px" width="13" height="17"><use href="#bulb"/></svg>
 <div class="t" style="left:653px;top:607px;font:bold 11px 'Liberation Sans';color:#4a4a4a">21,</div>
 <!-- right scrollbar -->
 <div class="a" style="left:1348px;top:197px;width:17px;height:401px;background:#dcefd4"></div>
 <svg class="a" style="left:1352px;top:204px" width="9" height="5" viewBox="0 0 9 5"><path d="M0 5h9L4.5 0z" fill="#5cb03a"/></svg>
 <div class="a" style="left:1350px;top:335px;width:13px;height:243px;background:#fff;border-radius:7px"></div>
 <div class="a" style="left:1354px;top:453px;width:5px;height:1px;background:#a9bde0"></div><div class="a" style="left:1354px;top:456px;width:5px;height:1px;background:#a9bde0"></div><div class="a" style="left:1354px;top:459px;width:5px;height:1px;background:#a9bde0"></div>
 <svg class="a" style="left:1352px;top:586px" width="9" height="5" viewBox="0 0 9 5"><path d="M0 0h9L4.5 5z" fill="#5cb03a"/></svg>
 <!-- red highlight -->
 <div class="a" style="left:212px;top:558px;width:659px;height:25px;border:3px solid #f00;border-radius:2px"></div>
</div>
<div id="task">
 <div class="a" style="left:0;top:0;width:1240px;height:1px;background:#b9b9b9"></div>
 <div class="a" style="left:0;top:0;width:48px;height:39px;background:#243a45"></div>
 <svg class="a" style="left:16px;top:12px" width="17" height="17" viewBox="0 0 17 17"><path d="M0 1.2L6.3 0.3V7.6H0zM7.2 0.2L16.4 -1V7.6H7.2zM0 8.7H6.3V16L0 15.1zM7.2 8.7H16.4V17.2L7.2 16.1z" fill="#fff"/></svg>
 <div class="a" style="left:48px;top:1px;width:343px;height:38px;background:#f0f0f0"></div>
 <svg class="a" style="left:60px;top:12px" width="17" height="17" viewBox="0 0 17 17"><circle cx="10.5" cy="6.5" r="5.3" fill="none" stroke="#111" stroke-width="1.3"/><path d="M6.7 10.3L0.7 16.3" stroke="#111" stroke-width="1.4"/></svg>
 <div class="t" style="left:88px;top:12px;font-size:14.6px;color:#222">Введите здесь текст для поиска</div>
 <svg class="a" style="left:407px;top:12px" width="18" height="17" viewBox="0 0 18 17"><path d="M1 1.5h13M1 15.5h13M2.5 4.5h10v8h-10z" fill="none" stroke="#fff" stroke-width="1.3"/><path d="M16 1v3M16 6v5M16 13v3" stroke="#fff" stroke-width="1.5"/></svg>
 <svg class="a" style="left:455px;top:10px" width="24" height="20" viewBox="0 0 24 20"><path d="M0 1h9l2 2h13v17H0z" fill="#e8a730"/><path d="M0 5h24v15H0z" fill="#ffd35c"/><path d="M7 11h10v8H7z" fill="#3a7bd5"/><path d="M9 13h6v6H9z" fill="#ffd35c"/></svg>
 <svg class="a" style="left:503px;top:8px" width="25" height="25" viewBox="0 0 25 25"><circle cx="12.5" cy="12.5" r="11.3" fill="none" stroke="#2bc56c" stroke-width="2"/><path d="M9.5 7l-1.5 7c-.5 3 3.5 4 5 1l2-8" fill="none" stroke="#2bc56c" stroke-width="2"/></svg>
 <svg class="a" style="left:553px;top:8px" width="24" height="24" viewBox="0 0 24 24"><circle cx="11.5" cy="11.5" r="11" fill="#2ca5e0"/><path d="M5 11.5l12-5-2 11-4-3-2 2v-3l5-5-7 4z" fill="#fff"/></svg>
 <div class="a" style="left:563px;top:23px;width:16px;height:11px;background:#e53935;border-radius:2px"></div>
 <div class="t" style="left:564px;top:23px;font:9px/11px 'Liberation Sans';color:#fff">.40</div>
 <svg class="a" style="left:603px;top:8px" width="23" height="23" viewBox="0 0 24 24"><path d="M12 12L21.53 6.5A11 11 0 0 0 2.47 6.5Z" fill="#db4437"/><path d="M12 12L12 23A11 11 0 0 0 21.53 6.5Z" fill="#f4c20d"/><path d="M12 12L2.47 6.5A11 11 0 0 0 12 23Z" fill="#0f9d58"/><circle cx="12" cy="12" r="5.2" fill="#fff"/><circle cx="12" cy="12" r="4.1" fill="#4285f4"/></svg>
 <svg class="a" style="left:651px;top:8px" width="24" height="24" viewBox="0 0 24 24"><circle cx="12" cy="12" r="11.300" fill="#fff" stroke="#1e88ff" stroke-width="1.500"/><path d="M15.500 1.500L13.600 6.200" stroke="#1ea0ff" stroke-width="2.600"/><path d="M8.400 22.500L10.400 17.800" stroke="#1ea0ff" stroke-width="2.600"/><path d="M13.800 6.300C15.600 6.700 16.300 8.200 15.600 10.200L13.600 15.300C12.800 17.400 11.300 18.200 9.700 17.700 8.100 17.200 7.600 15.600 8.400 13.600L10.400 8.600C11.200 6.700 12.200 6 13.800 6.300Z" fill="none" stroke="#3a7af0" stroke-width="2.600"/></svg>
 <svg class="a" style="left:700px;top:8px" width="24" height="24" viewBox="0 0 24 24"><rect x="0.500" y="0.500" width="22.500" height="22.500" rx="1.500" fill="#1a3fcc" stroke="#0e2a90" stroke-width=".6"/><rect x="7" y="0.500" width="11" height="7.500" fill="#d8d8d8"/><rect x="13" y="1.500" width="2.700" height="5.500" fill="#1a3fcc"/><rect x="3" y="10" width="17" height="12.800" fill="#fff"/><path d="M3.500 12.800h16M3.500 16h16M3.500 19.200h12" stroke="#f0a8b0" stroke-width="1.200"/><path d="M3 22.500h17" stroke="#b02030" stroke-width=".8"/><text x="15" y="21" font-family="Liberation Sans" font-size="5" fill="#333">31</text></svg>
 <div class="a" style="left:545px;top:37px;width:40px;height:2px;background:#76b9ed"></div>
 <div class="a" style="left:594px;top:37px;width:40px;height:2px;background:#76b9ed"></div>
 <div class="a" style="left:643px;top:37px;width:40px;height:2px;background:#76b9ed"></div>
 <div class="a" style="left:692px;top:37px;width:40px;height:2px;background:#76b9ed"></div>
 <!-- tray -->
 <svg class="a" style="left:1096px;top:15px" width="14" height="8" viewBox="0 0 14 8"><path d="M1 7.5L7 1.5l6 6" fill="none" stroke="#fff" stroke-width="1.3"/></svg>
 <svg class="a" style="left:1118px;top:12px" width="18" height="14" viewBox="0 0 18 14"><path d="M6.500 4.500H15.500V12.500H6.500" fill="none" stroke="#fff" stroke-width="1.1"/><path d="M16 6.500h1v4h-1z" fill="#fff"/><path d="M2.500 1.500v2.500M5 1.500v2.500" stroke="#fff" stroke-width="1"/><path d="M1.500 4h4.500v2.300c0 1.200-1 1.900-2.250 1.900S1.500 7.500 1.500 6.300Z" fill="none" stroke="#fff" stroke-width="1"/><path d="M3.700 8.200V13" stroke="#fff" stroke-width="1"/></svg>
 <svg class="a" style="left:1146px;top:12px" width="14" height="14" viewBox="0 0 14 14"><path d="M1 13A12 12 0 0 1 13 1M4 13A9 9 0 0 1 13 4M7 13A6 6 0 0 1 13 7" fill="none" stroke="#fff" stroke-width="1.1"/><circle cx="12" cy="12" r="1.5" fill="#fff"/></svg>
 <svg class="a" style="left:1167px;top:11px" width="17" height="15" viewBox="0 0 17 15"><path d="M1 5h2.500L7.500 1.500v12L3.500 10H1z" fill="none" stroke="#fff" stroke-width="1.1"/><path d="M10 5a3 3 0 0 1 0 5M12 3.500a5.500 5.500 0 0 1 0 8" fill="none" stroke="#fff" stroke-width="1.100"/><path d="M14.200 2a7.500 7.500 0 0 1 0 11" fill="none" stroke="#aaa" stroke-width="1"/></svg>
 <div class="a" style="left:1188px;top:0;width:22px;height:39px;background:#343f55"></div>
 <svg class="a" style="left:1190px;top:10px" width="18" height="17" viewBox="0 0 18 17"><path d="M1.500 16C3 10 9 4 17 1.200 16 6 11 12 1.500 16z" fill="#a070d8"/><path d="M3 14.500C7 10.500 11 6 16 2" stroke="#d8c0f0" stroke-width=".8" fill="none"/></svg>
 <div class="t" style="left:1218px;top:13px;font-size:12px;color:#fff">РУС</div>
 <div class="t" style="left:1253px;top:5px;width:54px;text-align:center;font-size:11.5px;color:#fff">9:59</div>
 <div class="t" style="left:1253px;top:22px;width:54px;text-align:center;font-size:11px;letter-spacing:-0.2px;color:#fff">19.12.2020</div>
 <svg class="a" style="left:1324px;top:11px" width="18" height="17" viewBox="0 0 18 17"><path d="M1 1h16v11H7l-4 4v-4H1z" fill="#fff"/><path d="M4 4h10M4 6.5h10M4 9h7" stroke="#213843" stroke-width="1"/></svg>
 <div class="a" style="left:1332px;top:19px;width:17px;height:17px;border-radius:50%;background:#2b2b2b;border:1.5px solid #6a6a6a"></div>
 <div class="t" style="left:1337px;top:21px;font:bold 12px/13px 'Liberation Sans';color:#fff">7</div>
</div>
</body></html>
